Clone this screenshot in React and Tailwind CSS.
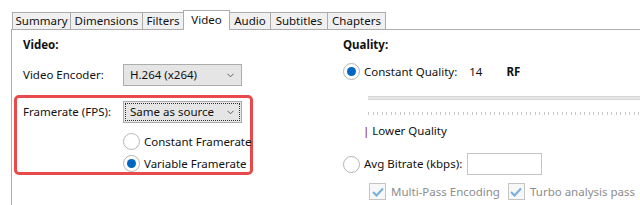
import React from 'react';

const tabs = [
  { name: 'Summary', w: 'w-[59px]' },
  { name: 'Dimensions', w: 'w-[73px]' },
  { name: 'Filters', w: 'w-[42px]' },
  { name: 'Video', w: 'w-[47px]', active: true },
  { name: 'Audio', w: 'w-[42px]' },
  { name: 'Subtitles', w: 'w-[58px]' },
  { name: 'Chapters', w: 'w-[59px]' },
];

const Chevron = () => (
  <svg width="7" height="5" viewBox="0 0 7 5" className="text-[#606060]">
    <path d="M0.5 0.8 L3.5 3.8 L6.5 0.8" fill="none" stroke="currentColor" strokeWidth="1" />
  </svg>
);

const Select = ({ value, focused }) => (
  <div className="w-[119px] h-[22px] border border-[#adadad] bg-[#e5e5e5] p-[1px]">
    <div
      className={`h-full flex items-center justify-between pl-[4px] pr-[5px] ${
        focused ? 'border border-dotted border-[#333]' : 'border border-transparent'
      }`}
    >
      <span>{value}</span>
      <Chevron />
    </div>
  </div>
);

const Radio = ({ checked, label, className = '' }) => (
  <div className={`flex items-center gap-[4px] whitespace-nowrap ${className}`}>
    <span className="w-[17px] h-[17px] shrink-0 rounded-full border border-[#b5b5b5] bg-white flex items-center justify-center">
      {checked && <span className="w-[9px] h-[9px] rounded-full bg-[#0067c0]" />}
    </span>
    <span>{label}</span>
  </div>
);

const Check = ({ label }) => (
  <div className="flex items-center gap-[5px] whitespace-nowrap text-[#8c8c8c]">
    <span className="w-[17px] h-[17px] shrink-0 border border-[#c4c4c4] bg-[#f7f7f7] flex items-center justify-center">
      <svg width="12" height="10" viewBox="0 0 12 10">
        <path d="M1 5 L4.5 8.5 L11 1.5" fill="none" stroke="#76aee3" strokeWidth="2" />
      </svg>
    </span>
    <span>{label}</span>
  </div>
);

export default function App() {
  const ticks = Array.from({ length: 62 });
  return (
    <div className="w-[640px] h-[205px] overflow-hidden bg-white text-[11.5px] leading-[16px] text-[#111] whitespace-nowrap font-['Noto_Sans',sans-serif]">
      <div className="flex items-end pl-[12px] h-[29px]">
        {tabs.map((t) =>
          t.active ? (
            <div
              key={t.name}
              className={`${t.w} -ml-px h-[20px] mb-[-1px] relative z-10 bg-white border border-b-0 border-[#acacac] flex items-start justify-center pt-[1px]`}
            >
              {t.name}
            </div>
          ) : (
            <div
              key={t.name}
              className={`${t.w} -ml-px first:ml-0 h-[17px] bg-[#f0f0f0] border border-b-0 border-[#acacac] flex items-center justify-center`}
            >
              {t.name}
            </div>
          )
        )}
      </div>

      <div className="ml-[11px] h-[200px] border-t border-l border-[#acacac] flex">
        <div className="w-[331px] shrink-0 pt-[7px]">
          <div className="pl-[11px] font-bold">Video:</div>
          <div className="pl-[11px] mt-[11px] flex items-center">
            <span className="w-[100px]">Video Encoder:</span>
            <Select value="H.264 (x264)" />
          </div>
          <div className="ml-[2px] mt-[9px] w-[239px] h-[80px] border-[3px] border-[#e8494b] rounded-[5px] pl-[6px] pt-[3px]">
            <div className="flex items-center">
              <span className="w-[100px] -mt-px">Framerate (FPS):</span>
              <Select value="Same as source" focused />
            </div>
            <Radio label="Constant Framerate" className="ml-[100px] mt-[10px]" />
            <Radio checked label="Variable Framerate" className="ml-[100px] mt-[5px]" />
          </div>
        </div>

        <div className="flex-1 pt-[7px]">
          <div className="font-bold">Quality:</div>
          <div className="mt-[10px] flex items-center">
            <Radio checked label="Constant Quality:" />
            <span className="ml-[12px]">14</span>
            <span className="ml-[24px] font-bold">RF</span>
          </div>
          <div className="ml-[25px] mt-[16px] h-[4px] bg-[#e7e7e7] border-y border-[#d6d6d6]" />
          <div className="ml-[25px] mt-[12px] h-[3px] flex gap-[3.5px] overflow-hidden">
            {ticks.map((_, i) => (
              <span key={i} className="w-px h-[3px] shrink-0 bg-[#c8c8c8]" />
            ))}
          </div>
          <div className="ml-[20px] mt-[8px]">
            <span className="text-[#8b1a1a]">|</span> Lower Quality
          </div>
          <div className="mt-[14px] flex items-center">
            <Radio label="Avg Bitrate (kbps):" />
            <span className="ml-[5px] w-[75px] h-[22px] border border-[#c4c4c4] bg-white" />
          </div>
          <div className="ml-[26px] mt-[8px] flex items-center gap-[8px]">
            <Check label="Multi-Pass Encoding" />
            <Check label="Turbo analysis pass" />
          </div>
        </div>
      </div>
    </div>
  );
}
